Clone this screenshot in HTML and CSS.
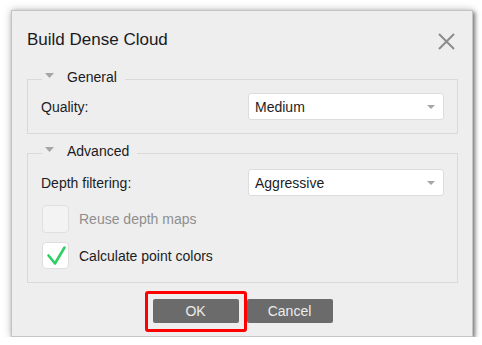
FILE: index.html
```html
<!DOCTYPE html>
<html>
<head>
<meta charset="utf-8">
<link rel="stylesheet" href="styles.css">
</head>
<body>
<div class="dialog">
  <div class="titlebar">
    <span class="title">Build Dense Cloud</span>
    <svg class="close" width="17" height="17" viewBox="0 0 17 17"><path d="M1 1 L16 16 M16 1 L1 16" stroke="#8c8c8c" stroke-width="2" fill="none"/></svg>
  </div>
  <fieldset class="group group-general">
    <legend class="legend"><svg class="tri" width="9" height="5" viewBox="0 0 9 5"><path d="M0 0 H9 L4.5 5 Z" fill="#a6a6a6"/></svg><span>General</span></legend>
    <div class="row">
      <span class="label">Quality:</span>
      <div class="combo"><span>Medium</span><svg width="8" height="4" viewBox="0 0 8 4"><path d="M0 0 H8 L4 4 Z" fill="#a6a6a6"/></svg></div>
    </div>
  </fieldset>
  <fieldset class="group group-advanced">
    <legend class="legend"><svg class="tri" width="9" height="5" viewBox="0 0 9 5"><path d="M0 0 H9 L4.5 5 Z" fill="#a6a6a6"/></svg><span>Advanced</span></legend>
    <div class="row">
      <span class="label">Depth filtering:</span>
      <div class="combo"><span>Aggressive</span><svg width="8" height="4" viewBox="0 0 8 4"><path d="M0 0 H8 L4 4 Z" fill="#a6a6a6"/></svg></div>
    </div>
    <div class="check disabled"><span class="box"></span><span class="check-label">Reuse depth maps</span></div>
    <div class="check checked"><span class="box"><svg width="27" height="27" viewBox="0 0 27 27"><path d="M6.5 13.5 L13 21.5 L22.5 5.5" stroke="#2fcf63" stroke-width="2.6" fill="none" stroke-linecap="round" stroke-linejoin="round"/></svg></span><span class="check-label">Calculate point colors</span></div>
  </fieldset>
  <div class="buttons">
    <div class="btn-wrap"><button class="btn">OK</button><span class="highlight"></span></div>
    <button class="btn">Cancel</button>
  </div>
</div>
</body>
</html>
```

FILE: styles.css
```css
html, body {
  margin: 0;
  padding: 0;
  background: #ffffff;
}
body {
  font-family: "Liberation Sans", Arial, sans-serif;
  font-size: 14px;
  color: #1c1c24;
}
.dialog {
  margin: 10px 0 0 11px;
  width: 462px;
  height: 327px;
  box-sizing: border-box;
  background: #eeeeee;
  border: 1px solid #c4c4c4;
  box-shadow: 2px 2px 4px rgba(0,0,0,0.45), 0 0 8px rgba(0,0,0,0.25);
  padding: 0 14px 0 15px;
  display: flex;
  flex-direction: column;
}
.titlebar {
  display: flex;
  justify-content: space-between;
  align-items: center;
  margin-top: 17px;
  height: 24px;
  padding-right: 3px;
}
.title {
  font-size: 17px;
  line-height: 24px;
  color: #1a1a22;
}
.close {
  display: block;
  margin-top: 2px;
}
.group {
  margin: 0;
  border: 1px solid #d9d9d9;
  padding: 0 13px 13px 13px;
  min-inline-size: 0;
}
.group-general {
  margin-top: 18px;
  padding-top: 5px;
}
.group-advanced {
  margin-top: 10px;
  padding-top: 7px;
}
.legend {
  display: flex;
  align-items: flex-start;
  margin-left: 1px;
  padding: 0 8px 4px 3px;
  line-height: 14px;
  font-size: 14px;
  color: #1a1a22;
}
.tri {
  display: block;
  margin-top: 3px;
  margin-right: 13px;
}
.row {
  display: grid;
  grid-template-columns: 1fr 196px;
  align-items: center;
}
.label {
  line-height: 16px;
}
.combo {
  height: 27px;
  box-sizing: border-box;
  background: #ffffff;
  border: 1px solid #dcdcdc;
  border-radius: 3px;
  display: flex;
  align-items: center;
  justify-content: space-between;
  padding: 0 8px 0 6px;
}
.combo svg {
  display: block;
}
.check {
  display: flex;
  align-items: center;
  margin-top: 9px;
}
.box {
  width: 27px;
  height: 27px;
  box-sizing: border-box;
  border: 1px solid #dedede;
  border-radius: 4px;
  background: #ffffff;
  margin-left: 1px;
  margin-right: 10px;
  position: relative;
}
.box svg {
  position: absolute;
  left: -1px;
  top: -1px;
}
.disabled .box {
  background: #f3f3f3;
  border-color: #e0e0e0;
  height: 28px;
}
.disabled .check-label {
  color: #8e8e8e;
}
.buttons {
  display: flex;
  justify-content: center;
  gap: 8px;
  margin-top: 16px;
}
.btn-wrap {
  position: relative;
  display: flex;
}
.btn {
  width: 86px;
  height: 24px;
  border: none;
  border-radius: 2px;
  background: #6b6b6b;
  color: #ececec;
  font-family: "Liberation Sans", Arial, sans-serif;
  font-size: 14px;
  padding: 0;
}
.highlight {
  position: absolute;
  left: -8px;
  top: -8px;
  right: -8px;
  bottom: -9px;
  border: 3px solid #ff0000;
  border-radius: 3px;
  pointer-events: none;
}
```
